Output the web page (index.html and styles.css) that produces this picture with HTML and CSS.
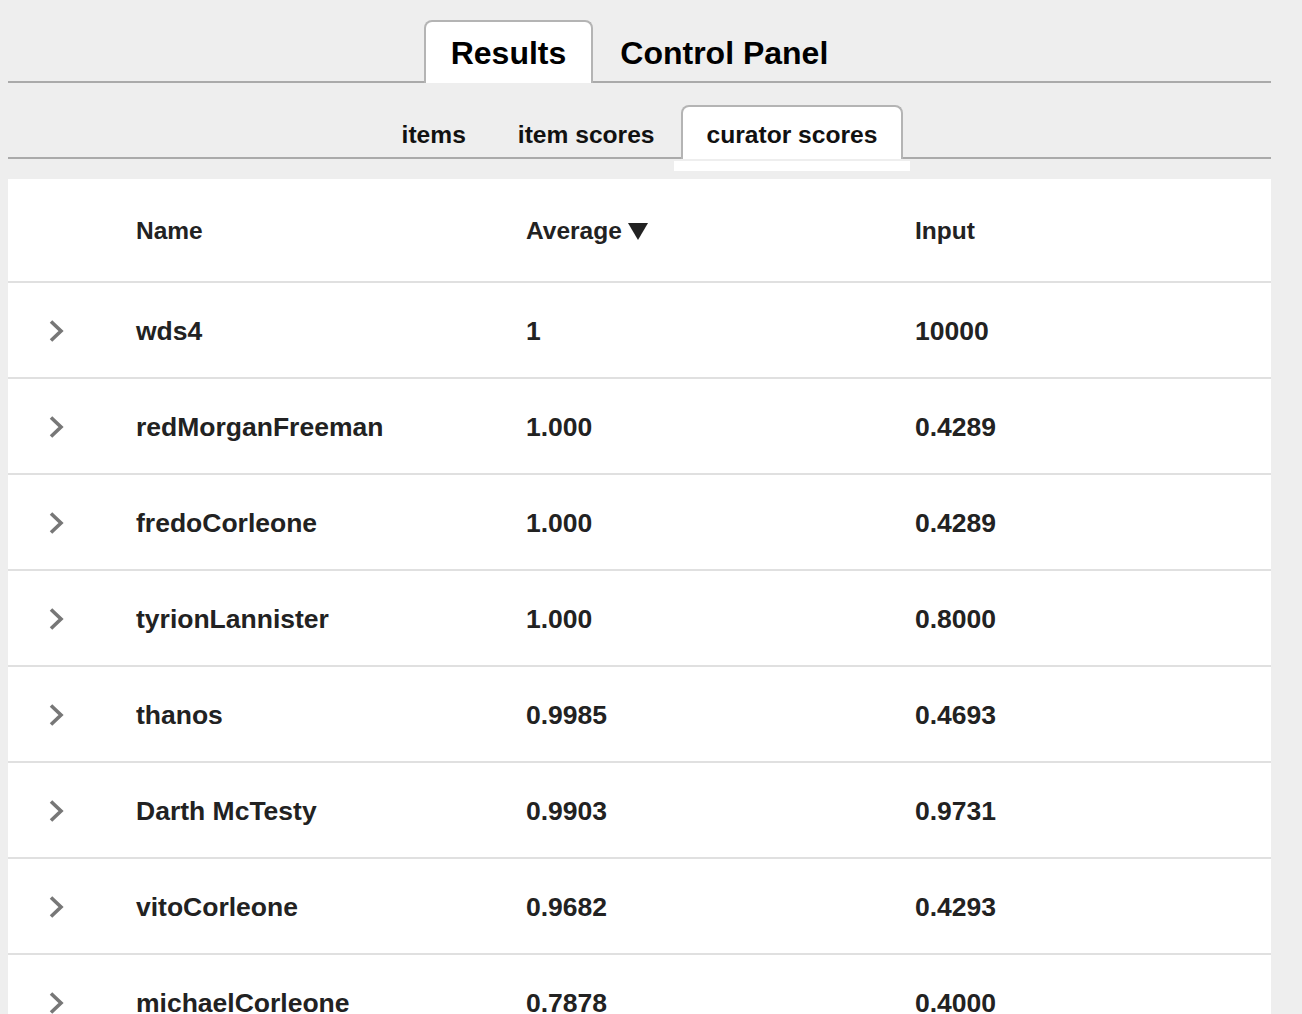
FILE: index.html
```html
<!DOCTYPE html>
<html>
<head>
<meta charset="utf-8">
<link rel="stylesheet" href="styles.css">
</head>
<body>
<div class="main">
  <div class="tabs">
    <div class="tab active">Results</div>
    <div class="tab">Control Panel</div>
  </div>
  <div class="subtabs">
    <div class="subtab">items</div>
    <div class="subtab">item scores</div>
    <div class="subtab active">curator scores</div>
  </div>
  <div class="table">
    <div class="row head">
      <div class="cell"></div>
      <div class="cell">Name</div>
      <div class="cell">Average<span class="sort"></span></div>
      <div class="cell">Input</div>
    </div>
    <div class="row">
      <div class="cell exp"><svg width="18" height="24" viewBox="0 0 18 24"><polyline points="3,2.5 13,12 3,21.5" fill="none" stroke="#777" stroke-width="3.6"/></svg></div>
      <div class="cell">wds4</div><div class="cell">1</div><div class="cell">10000</div>
    </div>
    <div class="row">
      <div class="cell exp"><svg width="18" height="24" viewBox="0 0 18 24"><polyline points="3,2.5 13,12 3,21.5" fill="none" stroke="#777" stroke-width="3.6"/></svg></div>
      <div class="cell">redMorganFreeman</div><div class="cell">1.000</div><div class="cell">0.4289</div>
    </div>
    <div class="row">
      <div class="cell exp"><svg width="18" height="24" viewBox="0 0 18 24"><polyline points="3,2.5 13,12 3,21.5" fill="none" stroke="#777" stroke-width="3.6"/></svg></div>
      <div class="cell">fredoCorleone</div><div class="cell">1.000</div><div class="cell">0.4289</div>
    </div>
    <div class="row">
      <div class="cell exp"><svg width="18" height="24" viewBox="0 0 18 24"><polyline points="3,2.5 13,12 3,21.5" fill="none" stroke="#777" stroke-width="3.6"/></svg></div>
      <div class="cell">tyrionLannister</div><div class="cell">1.000</div><div class="cell">0.8000</div>
    </div>
    <div class="row">
      <div class="cell exp"><svg width="18" height="24" viewBox="0 0 18 24"><polyline points="3,2.5 13,12 3,21.5" fill="none" stroke="#777" stroke-width="3.6"/></svg></div>
      <div class="cell">thanos</div><div class="cell">0.9985</div><div class="cell">0.4693</div>
    </div>
    <div class="row">
      <div class="cell exp"><svg width="18" height="24" viewBox="0 0 18 24"><polyline points="3,2.5 13,12 3,21.5" fill="none" stroke="#777" stroke-width="3.6"/></svg></div>
      <div class="cell">Darth McTesty</div><div class="cell">0.9903</div><div class="cell">0.9731</div>
    </div>
    <div class="row">
      <div class="cell exp"><svg width="18" height="24" viewBox="0 0 18 24"><polyline points="3,2.5 13,12 3,21.5" fill="none" stroke="#777" stroke-width="3.6"/></svg></div>
      <div class="cell">vitoCorleone</div><div class="cell">0.9682</div><div class="cell">0.4293</div>
    </div>
    <div class="row">
      <div class="cell exp"><svg width="18" height="24" viewBox="0 0 18 24"><polyline points="3,2.5 13,12 3,21.5" fill="none" stroke="#777" stroke-width="3.6"/></svg></div>
      <div class="cell">michaelCorleone</div><div class="cell">0.7878</div><div class="cell">0.4000</div>
    </div>
  </div>
</div>
</body>
</html>
```

FILE: styles.css
```css
html, body {
  background: #eeeeee;
}
body {
  margin: 8px;
  font-family: "Liberation Sans", Arial, sans-serif;
  overflow: hidden;
}
.main {
  width: 1263px;
}
.tabs {
  display: flex;
  justify-content: center;
  padding-top: 12px;
  border-bottom: 2px solid #aaaaaa;
}
.tab {
  font-size: 32px;
  font-weight: bold;
  color: #000;
  height: 61px;
  line-height: 63px;
  padding: 0 25px;
  border: 2px solid transparent;
  border-bottom: none;
  border-radius: 8px 8px 0 0;
  margin-bottom: -2px;
}
.tab.active {
  background: #fff;
  border-color: #b4b4b4;
}
.subtabs {
  display: flex;
  justify-content: center;
  margin-top: 22px;
  border-bottom: 2px solid #aaaaaa;
}
.subtab {
  position: relative;
  font-size: 24.6px;
  font-weight: bold;
  color: #111;
  height: 52px;
  line-height: 55px;
  padding: 0 24px;
  border: 2px solid transparent;
  border-bottom: none;
  border-radius: 8px 8px 0 0;
  margin-bottom: -2px;
}
.subtab.active {
  background: #fff;
  border-color: #b4b4b4;
}
.subtab.active::after {
  content: "";
  position: absolute;
  left: -9px;
  right: -9px;
  top: 54px;
  height: 10px;
  background: #fff;
}
.table {
  margin-top: 20px;
  background: #fff;
}
.row {
  display: grid;
  grid-template-columns: 128px 390px 389px 1fr;
  align-items: center;
  height: 92px;
  padding-top: 2px;
  box-sizing: content-box;
  border-bottom: 2px solid #e0e0e0;
  font-size: 26.5px;
  font-weight: bold;
  color: #222;
}
.row.head {
  height: 100px;
  font-size: 24.5px;
}
.sort {
  display: inline-block;
  vertical-align: -1px;
  margin-left: 6px;
  width: 0;
  height: 0;
  border-left: 10px solid transparent;
  border-right: 10px solid transparent;
  border-top: 17px solid #222;
}
.exp {
  display: flex;
  padding-left: 40px;
}
.exp svg {
  display: block;
}
```
